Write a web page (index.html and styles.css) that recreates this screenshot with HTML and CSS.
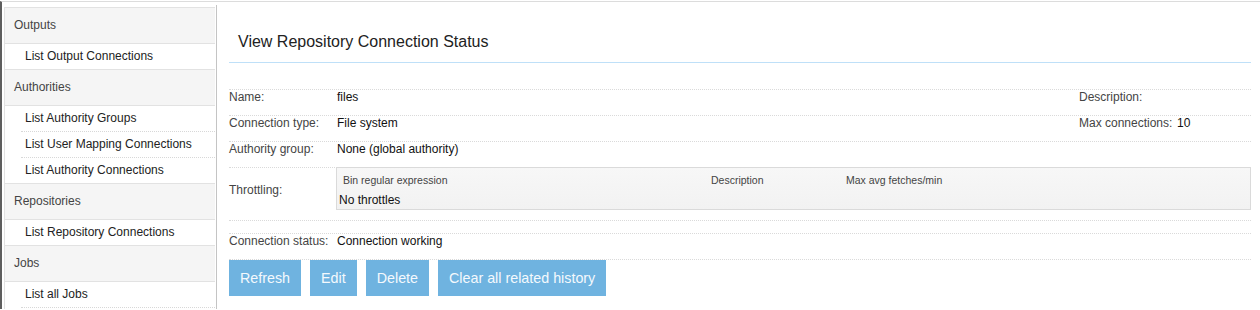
FILE: index.html
```html
<!DOCTYPE html>
<html>
<head>
<meta charset="utf-8">
<link rel="stylesheet" href="styles.css">
</head>
<body>
<div class="page">
  <nav class="sidebar">
    <div class="nav-head">Outputs</div>
    <div class="nav-item">List Output Connections</div>
    <div class="nav-head">Authorities</div>
    <div class="nav-item dotted">List Authority Groups</div>
    <div class="nav-item dotted">List User Mapping Connections</div>
    <div class="nav-item">List Authority Connections</div>
    <div class="nav-head">Repositories</div>
    <div class="nav-item">List Repository Connections</div>
    <div class="nav-head">Jobs</div>
    <div class="nav-item dotted">List all Jobs</div>
  </nav>
  <main class="main">
    <h1 class="title">View Repository Connection Status</h1>
    <div class="details">
      <div class="row">
        <div class="label">Name:</div>
        <div class="value">files</div>
        <div class="rlabel">Description:</div>
        <div class="rvalue"></div>
      </div>
      <div class="row">
        <div class="label">Connection type:</div>
        <div class="value">File system</div>
        <div class="rlabel">Max connections:</div>
        <div class="rvalue">10</div>
      </div>
      <div class="row">
        <div class="label">Authority group:</div>
        <div class="value">None (global authority)</div>
      </div>
      <div class="row throttle-row">
        <div class="label throttle-label">Throttling:</div>
        <div class="throttle-box">
          <div class="throttle-head">
            <span class="th th-bin">Bin regular expression</span>
            <span class="th th-desc">Description</span>
            <span class="th">Max avg fetches/min</span>
          </div>
          <div class="throttle-body">No throttles</div>
        </div>
      </div>
      <div class="row spacer"></div>
      <div class="row">
        <div class="label">Connection status:</div>
        <div class="value">Connection working</div>
      </div>
    </div>
    <div class="buttons">
      <button class="btn">Refresh</button>
      <button class="btn">Edit</button>
      <button class="btn">Delete</button>
      <button class="btn">Clear all related history</button>
    </div>
  </main>
</div>
</body>
</html>
```

FILE: styles.css
```css
html, body {
  margin: 0;
  padding: 0;
  background: #fff;
}
body {
  font-family: "Liberation Sans", Arial, sans-serif;
  font-size: 12px;
  color: #222;
  width: 1260px;
  height: 310px;
  overflow: hidden;
}
.page {
  display: flex;
  margin-top: 1px;
  border-top: 1px solid #dcdcdc;
  border-left: 2px solid #5e5e5e;
  height: 308px;
  box-sizing: border-box;
}
.sidebar {
  width: 211px;
  margin-left: 2px;
  margin-top: 5px;
  border-top: 1px solid #e2e2e2;
  border-left: 1px solid #e2e2e2;
  box-sizing: border-box;
  flex: none;
}
.nav-head {
  height: 35px;
  line-height: 34px;
  padding-left: 9px;
  background: #f5f5f5;
  color: #444;
  border-bottom: 1px solid #e2e2e2;
}
.nav-item {
  height: 25px;
  line-height: 25px;
  padding-left: 20px;
  color: #222;
  border-bottom: 1px solid #e2e2e2;
  background: #fff;
  position: relative;
}
.nav-item.dotted {
  border-bottom: none;
  height: 26px;
}
.nav-item.dotted::after {
  content: "";
  position: absolute;
  left: 16px;
  right: 0;
  bottom: 0;
  border-bottom: 1px dotted #d8d8d8;
}
.main {
  flex: 1;
  margin-left: 1px;
  margin-top: 3px;
  border-left: 1px solid #c4c4c4;
  padding: 0 9px 0 12px;
}
.title {
  margin: 0;
  font-weight: normal;
  font-size: 16px;
  color: #222;
  padding: 28px 0 0 9px;
  height: 29px;
  line-height: 18px;
  border-bottom: 1px solid #bfe0f8;
}
.details {
  margin-top: 26px;
}
.row {
  display: flex;
  align-items: flex-start;
  border-top: 1px dotted #dadada;
  height: 25px;
  line-height: 14px;
}
.label {
  width: 108px;
  flex: none;
  color: #444;
}
.value {
  flex: 1;
  color: #111;
}
.rlabel {
  width: 98px;
  flex: none;
  color: #444;
}
.rvalue {
  width: 74px;
  flex: none;
  color: #111;
}
.throttle-row {
  height: 52px;
  align-items: stretch;
}
.throttle-label {
  width: 107px;
  height: 43px;
  display: flex;
  align-items: center;
}
.throttle-box {
  flex: 1;
  height: 43px;
  box-sizing: border-box;
  margin-top: -1px;
  border: 1px solid #dadada;
  background: linear-gradient(#f7f7f7, #f2f2f2);
}
.throttle-head {
  display: flex;
  padding: 6px 0 0 6px;
  height: 14px;
  line-height: 13px;
  font-size: 10.5px;
  color: #444;
}
.th-bin {
  width: 368px;
}
.th-desc {
  width: 135px;
}
.throttle-body {
  padding: 5px 0 0 2px;
  line-height: 14px;
  color: #111;
}
.spacer {
  height: 12px;
}
.buttons {
  display: flex;
  gap: 9px;
  border-top: 1px dotted #dadada;
  padding-top: 0;
}
.btn {
  height: 36px;
  padding: 0 11px;
  border: none;
  background: #6fb3e0;
  color: #f4f9fd;
  font-family: "Liberation Sans", Arial, sans-serif;
  font-size: 14.3px;
}
```
